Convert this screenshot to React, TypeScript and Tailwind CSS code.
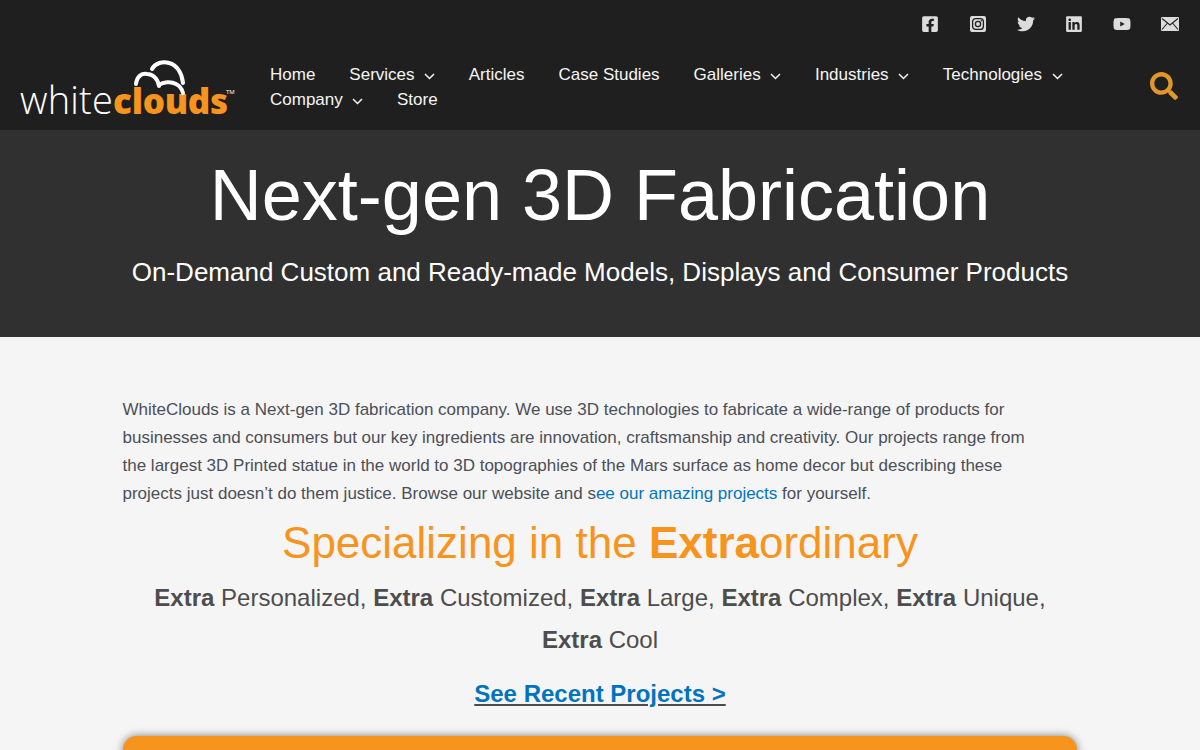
import React from 'react';
import { FaFacebookSquare, FaTwitter, FaLinkedin, FaYoutube, FaSearch } from 'react-icons/fa';

const Chevron = () => (
  <svg className="ml-[9.5px] mr-[-0.3px] mt-[3px]" width="11" height="7" viewBox="0 0 11 7" fill="none" stroke="#f5f5f5" strokeWidth="1.5">
    <path d="M1 1l4.5 4.5L10 1" />
  </svg>
);

const InstagramIcon = () => (
  <svg width="16" height="16" viewBox="0 0 16 16">
    <rect width="16" height="16" rx="2" fill="#dcdcdc" />
    <rect x="2.6" y="2.6" width="10.8" height="10.8" rx="3" fill="none" stroke="#1f1f1f" strokeWidth="1.3" />
    <circle cx="8" cy="8" r="2.6" fill="none" stroke="#1f1f1f" strokeWidth="1.3" />
    <circle cx="11.3" cy="4.7" r="0.7" fill="#1f1f1f" />
  </svg>
);

const MailIcon = () => (
  <svg width="18" height="14" viewBox="0 0 18 14">
    <rect width="18" height="14" rx="1" fill="#dcdcdc" />
    <path d="M1 1.5l8 6.5 8-6.5M1 12.5l5.5-6.5M17 12.5L11.5 6" fill="none" stroke="#1f1f1f" strokeWidth="1.1" />
  </svg>
);

const Logo = () => (
  <div className="relative w-[214px] h-[62px] shrink-0 font-['Open_Sans',sans-serif]">
    <div className="absolute left-0 top-[30px] h-[42px] whitespace-nowrap leading-[42px]">
      <span className="text-[38px] font-light tracking-[0.2px] text-white">white</span>
      <span className="text-[35px] font-extrabold tracking-[-0.3px] text-[#f7941e]">clouds</span>
    </div>
    <svg className="absolute left-[113px] top-[10px]" width="54" height="38" viewBox="0 0 54 38" fill="none" stroke="#ffffff" strokeWidth="4" strokeLinecap="round">
      <path d="M19 11C22 5 30 3 36 5C44 7 49 15 50 25" />
      <path d="M3 26C4 18 9 15 14 16C20 16 25 21 26 28" />
      <path d="M26 27C30 24 38 23 43 26C47 28 49 31 50 35" />
    </svg>
    <span className="absolute left-[206px] top-[41px] text-[6px] leading-none text-white">TM</span>
  </div>
);

const nav = [
  { label: 'Home' },
  { label: 'Services', caret: true },
  { label: 'Articles' },
  { label: 'Case Studies' },
  { label: 'Galleries', caret: true },
  { label: 'Industries', caret: true },
  { label: 'Technologies', caret: true },
  { label: 'Company', caret: true },
  { label: 'Store' },
];

const extras = ['Personalized,', 'Customized,', 'Large,', 'Complex,', 'Unique,'];

export default function App() {
  return (
    <div className="h-[750px] overflow-hidden bg-[#f5f5f5] font-['Liberation_Sans',Arial,sans-serif] text-[#4b4f58]">
      <header className="h-[130px] bg-[#1f1f1f]">
        <div className="flex h-[48px] items-center justify-end pr-[6px] text-[#dcdcdc]">
          <span className="flex w-[48px] justify-center"><FaFacebookSquare size={18} /></span>
          <span className="flex w-[48px] justify-center"><InstagramIcon /></span>
          <span className="flex w-[48px] justify-center"><FaTwitter size={18} /></span>
          <span className="flex w-[48px] justify-center"><FaLinkedin size={18} /></span>
          <span className="flex w-[48px] justify-center"><FaYoutube size={18} /></span>
          <span className="flex w-[48px] justify-center"><MailIcon /></span>
        </div>
        <div className="flex items-start pl-[20px] pr-[22px]">
          <Logo />
          <nav className="ml-[36px] mt-[14px] flex w-[830px] flex-wrap text-[17px] leading-[25px] text-[#f5f5f5]">
            {nav.map((item) => (
              <a key={item.label} className="mr-[34px] flex items-center">
                {item.label}
                {item.caret && <Chevron />}
              </a>
            ))}
          </nav>
          <FaSearch className="ml-auto mt-[24px] text-[#e2962b]" size={28} />
        </div>
      </header>

      <section className="h-[207px] bg-[#303030] pt-[23px] text-center text-white">
        <h1 className="text-[72px] leading-[84px]">Next-gen 3D Fabrication</h1>
        <p className="mt-[19px] text-[26px] leading-[32px]">On-Demand Custom and Ready-made Models, Displays and Consumer Products</p>
      </section>

      <main className="mx-auto w-[955px] pt-[59px]">
        <p className="w-[915px] text-[17px] leading-[28px]">
          WhiteClouds is a Next-gen 3D fabrication company. We use 3D technologies to fabricate a wide-range of products for businesses and consumers but our key ingredients are innovation, craftsmanship and creativity. Our projects range from the largest 3D Printed statue in the world to 3D topographies of the Mars surface as home decor but describing these projects just doesn’t do them justice. Browse our website and s<a className="text-[#0274be]">ee our amazing projects</a> for yourself.
        </p>
        <h2 className="mt-[6px] text-center text-[44px] leading-[58px] text-[#f7941e]">
          Specializing in the <strong>Extra</strong>ordinary
        </h2>
        <p className="mt-[5px] text-center text-[24px] leading-[42px] text-[#4d4d4d]">
          {extras.map((word) => (
            <span key={word}>
              <strong>Extra</strong> {word}{' '}
            </span>
          ))}
          <strong>Extra</strong> Cool
        </p>
        <p className="mt-[12px] text-center text-[24px] font-bold leading-[42px]">
          <a className="text-[#0274be] underline decoration-[#4d4d4d]">See Recent Projects &gt;</a>
        </p>
        <div className="mt-[21px] h-[60px] w-[954px] rounded-[14px] bg-[#f7941e] shadow-[0_0_8px_rgba(0,0,0,0.5)]" />
      </main>
    </div>
  );
}
